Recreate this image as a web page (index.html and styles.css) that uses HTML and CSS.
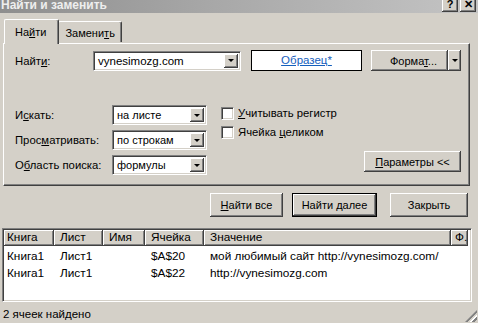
FILE: index.html
```html
<!DOCTYPE html>
<html lang="ru">
<head>
<meta charset="utf-8">
<title>Найти и заменить</title>
<link rel="stylesheet" href="styles.css">
</head>
<body>
<div class="titlebar">
  <span class="title">Найти и заменить</span>
  <span class="tbtns"><span class="tbtn">?</span><span class="tbtn">✕</span></span>
</div>
<div class="tabs">
  <div class="tab active">На<u>й</u>ти</div>
  <div class="tab">Замени<u>т</u>ь</div>
</div>
<div class="panel">
  <div class="row1">
    <span class="lbl lbl1">Найт<u>и</u>:</span>
    <div class="combo combo-find"><span class="val">vynesimozg.com</span><span class="drop"><i></i></span></div>
    <div class="sample">Образец*</div>
    <div class="split"><span class="btn fmt"><span>Форма<u>т</u>...</span></span><span class="btn arrow"><i></i></span></div>
  </div>
  <div class="lower">
    <div class="opts">
      <span class="lbl">И<u>с</u>кать:</span>
      <div class="combo"><span class="val">на листе</span><span class="drop"><i></i></span></div>
      <span class="lbl">Прос<u>м</u>атривать:</span>
      <div class="combo"><span class="val">по строкам</span><span class="drop"><i></i></span></div>
      <span class="lbl">О<u>б</u>ласть поиска:</span>
      <div class="combo"><span class="val">формулы</span><span class="drop"><i></i></span></div>
    </div>
    <div class="checks">
      <label class="chk"><span class="box"></span><span><u>У</u>читывать регистр</span></label>
      <label class="chk"><span class="box"></span><span>Ячейка <u>ц</u>еликом</span></label>
    </div>
    <span class="btn params"><span><u>П</u>араметры &lt;&lt;</span></span>
  </div>
</div>
<div class="actions">
  <span class="btn b-all"><span><u>Н</u>айти все</span></span>
  <span class="btn b-next default"><span>Найти <u>д</u>алее</span></span>
  <span class="btn b-close"><span>Закрыть</span></span>
</div>
<div class="list">
  <div class="lrow head">
    <span class="c1">Книга</span><span class="c2">Лист</span><span class="c3">Имя</span><span class="c4">Ячейка</span><span class="c5">Значение</span><span class="c6">Ф.</span>
  </div>
  <div class="lrow">
    <span class="c1">Книга1</span><span class="c2">Лист1</span><span class="c3"></span><span class="c4">$A$20</span><span class="c5">мой любимый сайт http://vynesimozg.com/</span><span class="c6"></span>
  </div>
  <div class="lrow">
    <span class="c1">Книга1</span><span class="c2">Лист1</span><span class="c3"></span><span class="c4">$A$22</span><span class="c5">http://vynesimozg.com</span><span class="c6"></span>
  </div>
</div>
<div class="status">
  <span class="stxt">2 ячеек найдено</span>
  <span class="grip"></span>
</div>
</body>
</html>
```

FILE: styles.css
```css
* { box-sizing: border-box; }
html, body { margin: 0; padding: 0; }
body {
  width: 478px;
  height: 323px;
  overflow: hidden;
  background: #d4d0c8;
  font-family: "Liberation Sans", Arial, sans-serif;
  font-size: 11px;
  color: #000;
}
u { text-decoration: underline; text-underline-offset: 1px; }

.titlebar {
  height: 13px;
  background: linear-gradient(to right, #8e8e8e 0%, #a8a8a8 45%, #c4c4c4 100%);
  display: flex;
  justify-content: space-between;
  align-items: flex-end;
  overflow: hidden;
}
.title {
  color: #eeeeee;
  font-weight: bold;
  font-size: 12px;
  line-height: 14px;
  margin: 0 0 1px 1px;
}
.tbtns { display: flex; gap: 2px; margin-right: 2px; margin-bottom: 1px; }
.tbtn {
  width: 16px;
  height: 15px;
  background: #d4d0c8;
  box-shadow: inset -1px -1px #404040, inset 1px 1px #fff, inset -2px -2px #808080;
  font-weight: bold;
  font-size: 11px;
  display: flex;
  align-items: flex-end;
  justify-content: center;
  padding-bottom: 2px;
  line-height: 11px;
}

.tabs {
  display: flex;
  align-items: flex-end;
  height: 30px;
  padding-left: 4px;
  position: relative;
  z-index: 1;
}
.tab {
  height: 21px;
  padding: 4px 6px 0 6px;
  border-top: 1px solid #fff;
  border-left: 1px solid #fff;
  border-right: 1px solid #404040;
  box-shadow: inset -1px 0 #808080;
  border-radius: 2px 2px 0 0;
  background: #d4d0c8;
  line-height: 14px;
  margin-bottom: 1px;
}
.tab.active {
  height: 25px;
  padding: 5px 12px 0 10px;
  margin-bottom: -1px;
  margin-right: -1px;
  position: relative;
  z-index: 2;
}

.panel {
  margin: 0 8px 0 3px;
  height: 143px;
  border-top: 1px solid #fff;
  border-left: 1px solid #fff;
  border-right: 1px solid #404040;
  border-bottom: 1px solid #404040;
  box-shadow: inset -1px -1px #808080;
  padding: 6px 0 0 11px;
}

.row1 {
  display: flex;
  align-items: center;
  height: 21px;
}
.lbl { font-size: 11.3px; }
.lbl1 { width: 78px; }

.combo {
  height: 20px;
  background: #fff;
  border-top: 1px solid #808080;
  border-left: 1px solid #808080;
  border-right: 1px solid #fff;
  border-bottom: 1px solid #fff;
  box-shadow: inset 1px 1px #404040, inset -1px -1px #d4d0c8;
  display: flex;
  align-items: center;
  padding: 2px 2px 2px 4px;
}
.combo .val { flex: 1; line-height: 14px; }
.combo-find { width: 148px; font-size: 11.5px; }
.drop {
  width: 14px;
  height: 14px;
  background: #d4d0c8;
  box-shadow: inset -1px -1px #404040, inset 1px 1px #fff, inset -2px -2px #808080;
  display: flex;
  align-items: center;
  justify-content: center;
}
.drop i, .arrow i {
  width: 0; height: 0;
  border-left: 3px solid transparent;
  border-right: 3px solid transparent;
  border-top: 3px solid #000;
}

.sample {
  width: 111px;
  height: 21px;
  margin-left: 10px;
  background: #fff;
  border: 1px solid #000;
  color: #1560bd;
  text-decoration: underline;
  text-align: center;
  line-height: 19px;
  font-size: 11.5px;
}
.split { display: flex; margin-left: 9px; }

.btn {
  background: #d4d0c8;
  box-shadow: inset -1px -1px #404040, inset 1px 1px #fff, inset -2px -2px #808080, inset 2px 2px #d4d0c8;
  display: flex;
  align-items: center;
  justify-content: center;
  line-height: 14px;
  white-space: nowrap;
}
.fmt { width: 77px; height: 21px; padding-left: 8px; }
.arrow { width: 13px; height: 21px; }

.lower {
  display: flex;
  align-items: flex-start;
  margin-top: 34px;
}
.opts {
  display: grid;
  grid-template-columns: 97px 95px;
  row-gap: 5px;
  align-items: center;
}
.opts .combo { width: 95px; }
.checks {
  display: flex;
  flex-direction: column;
  gap: 5px;
  margin-left: 14px;
  padding-top: 1px;
}
.chk { display: flex; align-items: center; gap: 4px; line-height: 14px; font-size: 11.3px; }
.box {
  width: 13px;
  height: 13px;
  background: #fff;
  border-top: 1px solid #808080;
  border-left: 1px solid #808080;
  border-right: 1px solid #fff;
  border-bottom: 1px solid #fff;
  box-shadow: inset 1px 1px #404040, inset -1px -1px #d4d0c8;
}
.params {
  width: 97px;
  height: 21px;
  margin-left: auto;
  margin-right: 8px;
  margin-top: 46px;
}

.actions {
  display: flex;
  justify-content: flex-end;
  padding-right: 10px;
  margin-top: 7px;
  height: 24px;
}
.actions .btn { height: 24px; }
.b-all { width: 73px; }
.b-next { width: 85px; margin-left: 9px; }
.b-close { width: 78px; margin-left: 13px; }
.default {
  box-shadow: inset 0 0 0 1px #000, inset -2px -2px #404040, inset 2px 2px #fff, inset -3px -3px #808080;
}

.list {
  margin: 11px 6px 0 2px;
  height: 74px;
  background: #fff;
  border-top: 1px solid #808080;
  border-left: 1px solid #808080;
  border-right: 1px solid #fff;
  border-bottom: 1px solid #fff;
  box-shadow: inset 1px 1px #404040, inset -1px -1px #d4d0c8;
  padding: 1px;
  font-size: 11.8px;
}
.lrow { display: flex; height: 17px; align-items: center; }
.lrow span { padding-left: 6px; white-space: nowrap; overflow: hidden; }
.lrow .c1 { width: 50px; padding-left: 3px; }
.lrow .c2 { width: 49px; }
.lrow .c3 { width: 42px; }
.lrow .c4 { width: 59px; }
.lrow .c5 { width: 247px; }
.lrow .c6 { width: 17px; padding-left: 4px; }
.head { height: 16px; margin-bottom: 1px; }
.head span {
  height: 16px;
  line-height: 15px;
  background: #d4d0c8;
  box-shadow: inset -1px -1px #404040, inset 1px 1px #fff, inset -2px -2px #808080;
}

.status {
  height: 21px;
  display: flex;
  align-items: center;
  justify-content: space-between;
  padding: 2px 0 0 3px;
}
.stxt { font-size: 11.5px; }
.grip {
  width: 12px;
  height: 12px;
  align-self: flex-end;
  margin-right: 1px;
  margin-bottom: 1px;
  background: repeating-linear-gradient(135deg, transparent 0 2px, #fff 2px 3px, #808080 3px 5px);
  clip-path: polygon(100% 0, 100% 100%, 0 100%);
}
```
